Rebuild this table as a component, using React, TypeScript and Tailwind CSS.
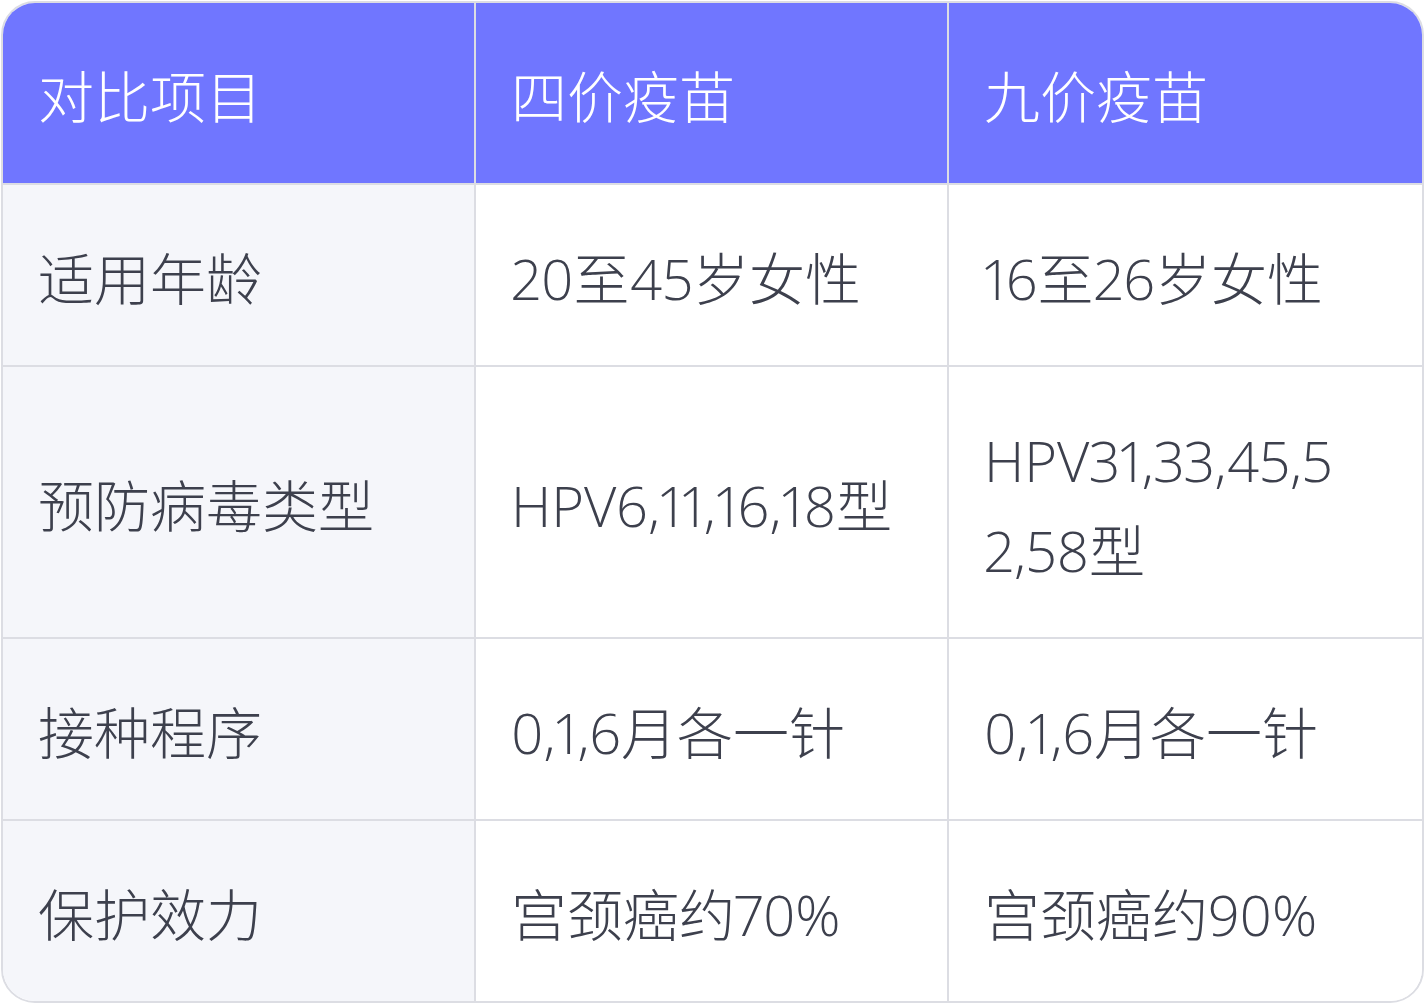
import React from 'react';

const rows = [
    ['适用年龄', '20至45岁女性', '16至26岁女性'],
    ['预防病毒类型', 'HPV6,11,16,18型', 'HPV31,33,45,52,58型'],
    ['接种程序', '0,1,6月各一针', '0,1,6月各一针'],
    ['保护效力', '宫颈癌约70%', '宫颈癌约90%'],
];

const font = { fontFamily: '"Open Sans", "Noto Sans CJK SC", sans-serif' };

export default function App() {
    return (
        <div className="w-[1425px] h-[1003px] bg-white p-[1px] proportional-nums" style={font}>
            <div className="rounded-[34px] border-2 border-[#dcdde3] overflow-hidden">
                <div className="grid grid-cols-3 bg-[#7076ff] border-b-2 border-[#dcdde3]">
                    {['对比项目', '四价疫苗', '九价疫苗'].map((h, i) => (
                        <div
                            key={h}
                            className={`pl-[35px] pr-[50px] pt-[48px] pb-[42px] text-[56px] leading-[90px] font-light text-white ${i < 2 ? 'border-r-2 border-[#dcdde3]' : ''}`}
                        >
                            {h}
                        </div>
                    ))}
                </div>
                {rows.map((r, ri) => (
                    <div
                        key={r[0]}
                        className={`grid grid-cols-3 ${ri < rows.length - 1 ? 'border-b-2 border-[#dcdde3]' : ''}`}
                    >
                        {r.map((c, i) => (
                            <div
                                key={i}
                                className={`flex items-center pl-[35px] pr-[50px] pt-[48px] pb-[42px] text-[56px] leading-[90px] font-light text-[#3d404d] break-all ${i === 0 ? 'bg-[#f5f6fa]' : 'bg-white'} ${i < 2 ? 'border-r-2 border-[#dcdde3]' : ''}`}
                            >
                                <span>{c}</span>
                            </div>
                        ))}
                    </div>
                ))}
            </div>
        </div>
    );
}
